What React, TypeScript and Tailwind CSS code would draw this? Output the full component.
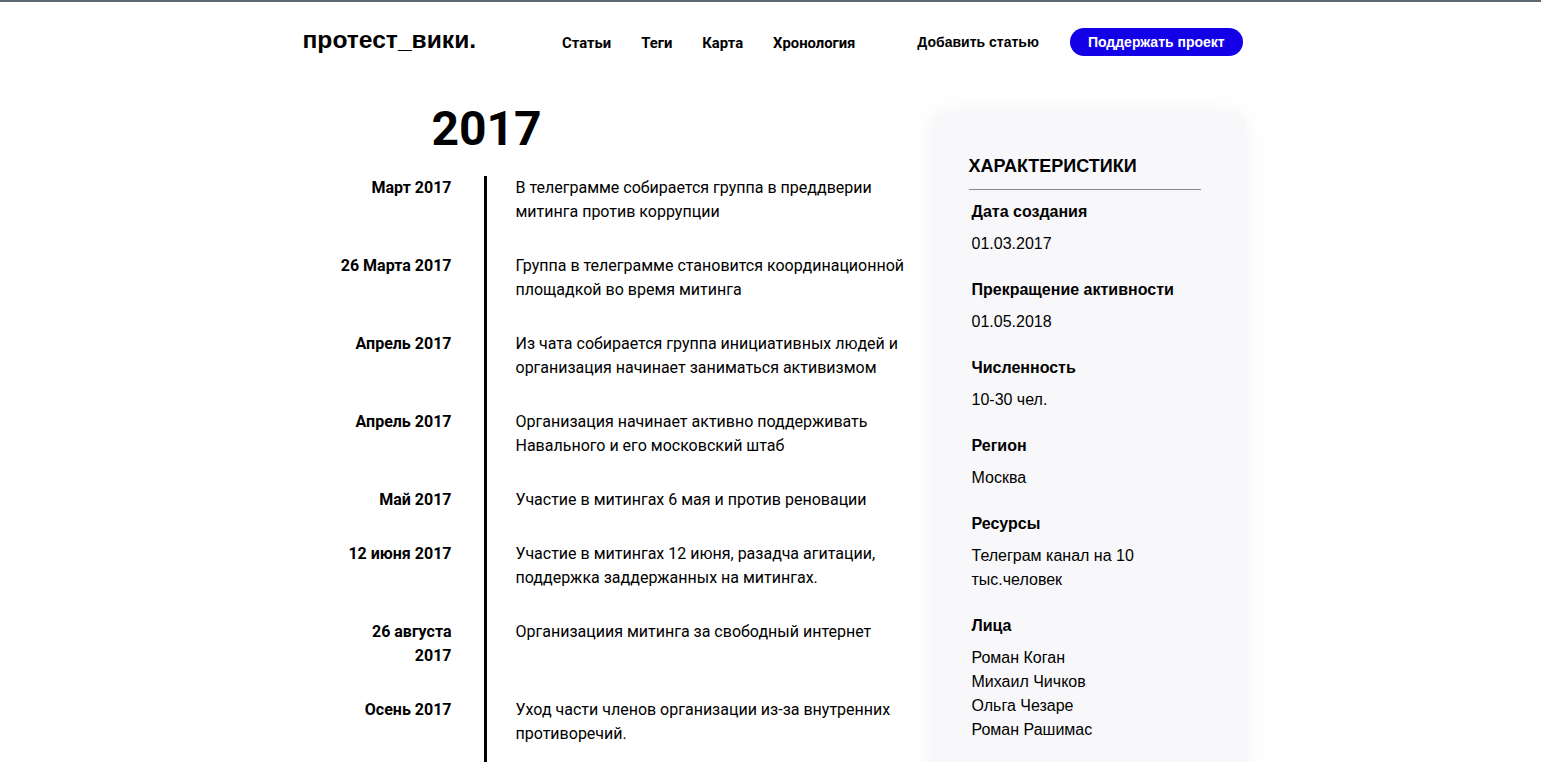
import React from 'react';

const events = [
  { date: 'Март 2017', text: 'В телеграмме собирается группа в преддверии митинга против коррупции' },
  { date: '26 Марта 2017', text: 'Группа в телеграмме становится координационной площадкой во время митинга' },
  { date: 'Апрель 2017', text: 'Из чата собирается группа инициативных людей и организация начинает заниматься активизмом' },
  { date: 'Апрель 2017', text: 'Организация начинает активно поддерживать Навального и его московский штаб' },
  { date: 'Май 2017', text: 'Участие в митингах 6 мая и против реновации' },
  { date: '12 июня 2017', text: 'Участие в митингах 12 июня, разадча агитации, поддержка заддержанных на митингах.' },
  { date: '26 августа 2017', text: 'Организациия митинга за свободный интернет' },
  { date: 'Осень 2017', text: 'Уход части членов организации из-за внутренних противоречий.' },
];

const facts: { label: string; values: string[] }[] = [
  { label: 'Дата создания', values: ['01.03.2017'] },
  { label: 'Прекращение активности', values: ['01.05.2018'] },
  { label: 'Численность', values: ['10-30 чел.'] },
  { label: 'Регион', values: ['Москва'] },
  { label: 'Ресурсы', values: ['Телеграм канал на 10 тыс.человек'] },
  { label: 'Лица', values: ['Роман Коган', 'Михаил Чичков', 'Ольга Чезаре', 'Роман Рашимас'] },
];

export default function App() {
  return (
    <div className="min-h-screen bg-white text-black border-t-2 border-[#5d6875]">
      <div className="mx-auto w-[940px]">
        {/* Header */}
        <header className="flex h-[80px] items-center whitespace-nowrap">
          <a className="ml-[2px] flex-none text-[24.6px] font-bold leading-none font-['Liberation_Sans',Arial,sans-serif] -mt-[3px]">протест_вики.</a>
          <nav className="ml-[86px] flex flex-none gap-[30px] text-[14.8px] font-bold font-['Roboto',sans-serif] mt-[2px]">
            <a>Статьи</a>
            <a>Теги</a>
            <a>Карта</a>
            <a>Хронология</a>
          </nav>
          <a className="ml-[62px] flex-none text-[14px] font-bold font-['Liberation_Sans',Arial,sans-serif]">Добавить статью</a>
          <button className="ml-[31px] h-[28px] flex-none rounded-full bg-[#1400e6] px-[18px] text-[14px] font-bold text-white font-['Liberation_Sans',Arial,sans-serif]">
            Поддержать проект
          </button>
        </header>

        <main className="flex items-start pt-[23px]">
          {/* Timeline */}
          <section className="w-[630px] flex-none font-['Roboto',sans-serif]">
            <h1 className="pl-[131px] text-[48px] font-bold leading-none h-[48px]">2017</h1>
            <div className="mt-[23px] pl-[36px]">
              {events.map((e, i) => (
                <div key={i} className="grid grid-cols-[147px_422px]">
                  <div className="pr-[32px] pb-[30px] text-right text-[16px] font-bold leading-[24px]">{e.date}</div>
                  <div className="border-l-[3px] border-black pl-[29px] pb-[30px] text-[16px] leading-[24px]">
                    {e.text}
                  </div>
                </div>
              ))}
            </div>
          </section>

          {/* Sidebar */}
          <aside className="mt-[7px] w-[315px] flex-none rounded-2xl bg-[#f8f8fa] pl-[38px] pr-[45px] pt-[40px] pb-[40px] shadow-[0_0_24px_rgba(0,0,0,0.05)] font-['Liberation_Sans',Arial,sans-serif]">
            <h2 className="border-b border-[#8a8a8a] pb-[9px] text-[18px] font-bold leading-[28px]">ХАРАКТЕРИСТИКИ</h2>
            <dl className="px-[3px] pt-[10px]">
              {facts.map((f) => (
                <div key={f.label} className="mb-[22px]">
                  <dt className="text-[16px] font-bold leading-[24px]">{f.label}</dt>
                  <dd className="mt-[8px] text-[16px] leading-[24px]">
                    {f.values.map((v) => (
                      <div key={v}>{v}</div>
                    ))}
                  </dd>
                </div>
              ))}
            </dl>
          </aside>
        </main>
      </div>
    </div>
  );
}
